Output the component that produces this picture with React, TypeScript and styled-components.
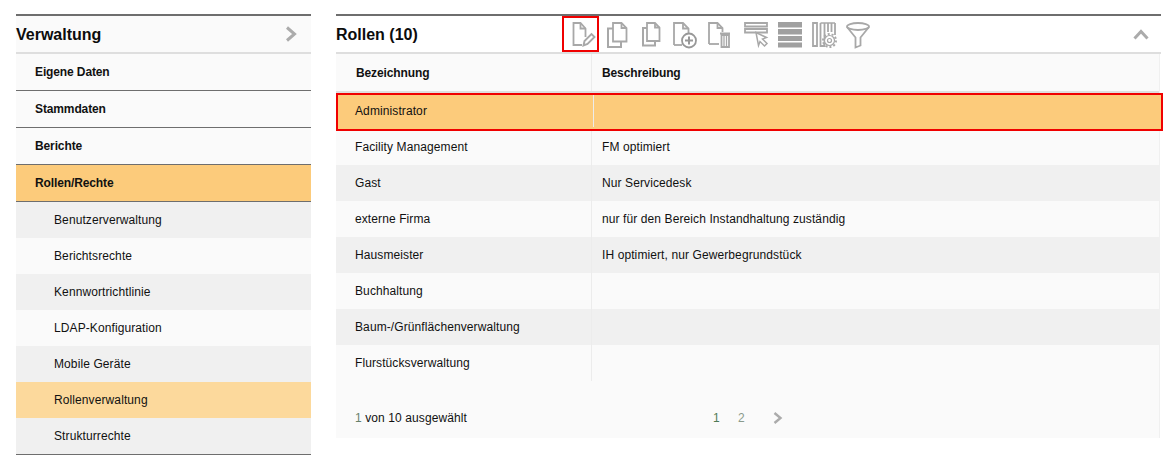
import React from "react";
import styled, { createGlobalStyle } from "styled-components";

const Global = createGlobalStyle`
  html, body { margin: 0; padding: 0; background: #fff; }
  body { font-family: "Liberation Sans", Arial, sans-serif; font-size: 12px; color: #111; letter-spacing: 0.1px; }
`;

const Page = styled.div`
  display: grid;
  grid-template-columns: 295px 825px;
  column-gap: 25px;
  align-items: start;
  padding: 14px 0 0 16px;
`;

const Sidebar = styled.aside`
  border-top: 2px solid #6e6e6e;
  background: #fafafa;
`;

const SideHeader = styled.header`
  height: 36px;
  border-bottom: 2px solid #dedede;
  display: flex;
  align-items: center;
  justify-content: space-between;
  padding-right: 14px;
`;

const Title = styled.h2<{ $width?: number }>`
  margin: 0;
  padding-top: 2px;
  font-size: 16px;
  font-weight: 700;
  letter-spacing: 0;
  color: #0c0c0c;
  flex: none;
  width: ${(p) => (p.$width ? `${p.$width}px` : "auto")};
`;

const MainItem = styled.div<{ $active?: boolean }>`
  height: 36px;
  border-bottom: 1px solid #6e6e6e;
  display: flex;
  align-items: center;
  padding-left: 19px;
  font-weight: 700;
  letter-spacing: -0.12px;
  background: ${(p) => (p.$active ? "#fccb7b" : "#fafafa")};
`;

const SubItem = styled.div<{ $bg: string }>`
  height: 36px;
  display: flex;
  align-items: center;
  padding-left: 38px;
  background: ${(p) => p.$bg};
`;

const SideEnd = styled.div`
  border-top: 1px solid #6e6e6e;
  height: 0;
  background: #fff;
`;

const Panel = styled.section`
  border-top: 2px solid #6e6e6e;
`;

const PanelHeader = styled.header`
  height: 36px;
  border-bottom: 2px solid #dedede;
  display: flex;
  align-items: stretch;
  background: #fff;
  & > h2 { align-self: center; }
`;

const Toolbar = styled.div`
  display: flex;
  align-items: center;
  flex: 1;
`;

const ToolButton = styled.div<{ $selected?: boolean; $gap?: number }>`
  box-sizing: border-box;
  width: ${(p) => (p.$selected ? 37 : 34)}px;
  height: 36px;
  margin-left: ${(p) => p.$gap ?? 0}px;
  padding-top: 2px;
  display: flex;
  align-items: center;
  justify-content: center;
  border: ${(p) => (p.$selected ? "2px solid #f00000" : "none")};
`;

const Collapse = styled.div`
  display: flex;
  align-items: center;
  padding-right: 12px;
`;

const Table = styled.div`
  background: #fafafa;
  border-right: 1px solid #f0f0f0;
  margin-right: 1px;
`;

const HeadRow = styled.div`
  display: grid;
  grid-template-columns: 256px 1fr;
  height: 37px;
  border-bottom: 2px solid #dedede;
  font-weight: 700;
  letter-spacing: -0.12px;
`;

const Row = styled.div<{ $bg: string; $selected?: boolean }>`
  box-sizing: border-box;
  display: grid;
  grid-template-columns: 256px 1fr;
  height: ${(p) => (p.$selected ? 38 : 36)}px;
  background: ${(p) => p.$bg};
  border: ${(p) => (p.$selected ? "2px solid #f00000" : "none")};
  margin: ${(p) => (p.$selected ? "0 -4px -2px 0" : "0")};
  padding-bottom: ${(p) => (p.$selected ? 2 : 0)}px;
  position: relative;
  z-index: ${(p) => (p.$selected ? 1 : 0)};
`;

const Cell = styled.div<{ $first?: boolean; $inset: number }>`
  box-sizing: border-box;
  display: flex;
  align-items: center;
  padding-left: ${(p) => p.$inset}px;
  border-right: ${(p) => (p.$first ? "1px solid #ececec" : "none")};
`;

const Footer = styled.footer`
  height: 57px;
  display: grid;
  grid-template-columns: 358px 1fr;
  padding: 22px 0 0 19px;
  box-sizing: border-box;
  line-height: 30px;
`;

const Count = styled.div`
  & > span { color: #66806a; }
`;

const Pager = styled.div`
  display: flex;
  align-items: center;
  height: 30px;
`;

const PageNum = styled.span<{ $current?: boolean }>`
  width: 25px;
  color: ${(p) => (p.$current ? "#4f7a55" : "#8a9a8c")};
`;

const PagerNext = styled.svg`
  margin-left: 10px;
`;

const Icon: React.FC<{ children: React.ReactNode }> = ({ children }) => (
  <svg
    width={24}
    height={26}
    viewBox="0 0 24 26"
    fill="none"
    stroke="#a8a8a8"
    strokeWidth={1.8}
    style={{ overflow: "visible" }}
  >
    {children}
  </svg>
);

const tools: { key: string; gap?: number; selected?: boolean; icon: React.ReactNode }[] = [
  {
    key: "edit",
    selected: true,
    icon: (
      <Icon>
        <path d="M16.5 15V6.500L11.500 1H4.500V23H13" />
        <path d="M11.500 1V6.500H16.500" />
        <path d="M14.500 23.500l1-4.500 7-7 3 3-7 7z" strokeWidth={1.9} />
      </Icon>
    ),
  },
  {
    key: "copy",
    icon: (
      <Icon>
        <path d="M9 1h8.500l5 5v13.500H9z" />
        <path d="M17.500 1v5h5" />
        <path d="M9 6.500H4V25h13v-5.500" strokeWidth={2} />
      </Icon>
    ),
  },
  {
    key: "copy-alt",
    icon: (
      <Icon>
        <path d="M9 1h8l4.500 4.500V19H9z" />
        <path d="M17 1v4.500h4.500" />
        <path d="M9 6H5v17.500h12V19" strokeWidth={2} />
      </Icon>
    ),
  },
  {
    key: "add",
    icon: (
      <Icon>
        <path d="M2 23V1h9l5.500 5.500V12" />
        <path d="M11 1v5.500h5.500" />
        <path d="M2 23h8" />
        <circle cx="17" cy="18.500" r="7" stroke="#989898" />
        <path d="M17 14.500v8M13 18.500h8" stroke="#989898" strokeWidth={2} />
      </Icon>
    ),
  },
  {
    key: "delete",
    icon: (
      <Icon>
        <path d="M3 22V1h8.500l5 5v4" />
        <path d="M11.500 1v5h5" />
        <path d="M3 22h10" />
        <path d="M14 11.500h10" strokeWidth={2} />
        <path d="M15.500 13h7.500v12h-7.500z" />
        <path d="M18 14v10M20.500 14v10" strokeWidth={1.300} />
      </Icon>
    ),
  },
  {
    key: "select-row",
    gap: 4,
    icon: (
      <Icon>
        <path d="M1 1h22v3.500H1z" strokeWidth={1.800} />
        <path d="M1 7h22v3.500H1z" strokeWidth={1.800} />
        <path d="M12 10.500l10.500 5-4 1.500 4.500 4.500-2.500 2.500-4.500-4.500-1.500 4z" fill="#fff" strokeWidth={1.500} />
      </Icon>
    ),
  },
  {
    key: "rows",
    icon: (
      <svg width={24} height={26} viewBox="0 0 24 26" fill="#a0a0a0">
        <rect x="0" y="0" width="24" height="5.500" />
        <rect x="0" y="7" width="24" height="5.500" />
        <rect x="0" y="14" width="24" height="5" />
        <rect x="0" y="20.500" width="24" height="5" />
      </svg>
    ),
  },
  {
    key: "columns",
    icon: (
      <Icon>
        <path d="M1 1h4v23H1z" />
        <path d="M8.500 1h14.500" strokeWidth={1.500} />
        <path d="M8.500 1v23h4V1" />
        <path d="M16 1v9M19.500 1v9M23 1v12" />
        <circle cx="17.500" cy="18.500" r="5" fill="#fff" strokeWidth={1.200} />
        <circle cx="17.500" cy="18.500" r="6.500" strokeWidth={2} strokeDasharray="2 2" />
        <circle cx="17.500" cy="18.500" r="2" strokeWidth={1.200} />
      </Icon>
    ),
  },
  {
    key: "filter",
    icon: (
      <Icon>
        <ellipse cx="12" cy="4.500" rx="11" ry="3.500" />
        <path d="M1 5l8.500 10.500V25.500l5-2v-8L23 5" />
      </Icon>
    ),
  },
];

const mainItems = ["Eigene Daten", "Stammdaten", "Berichte"];
const subItems = [
  "Benutzerverwaltung",
  "Berichtsrechte",
  "Kennwortrichtlinie",
  "LDAP-Konfiguration",
  "Mobile Geräte",
  "Rollenverwaltung",
  "Strukturrechte",
];
const rows: [string, string][] = [
  ["Facility Management", "FM optimiert"],
  ["Gast", "Nur Servicedesk"],
  ["externe Firma", "nur für den Bereich Instandhaltung zuständig"],
  ["Hausmeister", "IH optimiert, nur Gewerbegrundstück"],
  ["Buchhaltung", ""],
  ["Baum-/Grünflächenverwaltung", ""],
  ["Flurstücksverwaltung", ""],
];

export default function App() {
  return (
    <>
      <Global />
      <Page>
        <Sidebar>
          <SideHeader>
            <Title>Verwaltung</Title>
            <svg width="12" height="16" viewBox="0 0 12 16" fill="none" stroke="#ababab" strokeWidth={3}>
              <path d="M2 1.500L9.500 8 2 14.500" />
            </svg>
          </SideHeader>
          {mainItems.map((m) => (
            <MainItem key={m}>{m}</MainItem>
          ))}
          <MainItem $active>Rollen/Rechte</MainItem>
          {subItems.map((s, i) => (
            <SubItem key={s} $bg={s === "Rollenverwaltung" ? "#fcd99c" : i % 2 === 0 ? "#f0f0f0" : "#fafafa"}>
              {s}
            </SubItem>
          ))}
          <SideEnd />
        </Sidebar>
        <Panel>
          <PanelHeader>
            <Title $width={226}>Rollen (10)</Title>
            <Toolbar>
              {tools.map((t) => (
                <ToolButton key={t.key} $selected={t.selected} $gap={t.gap}>
                  {t.icon}
                </ToolButton>
              ))}
            </Toolbar>
            <Collapse>
              <svg width="16" height="11" viewBox="0 0 16 11" fill="none" stroke="#ababab" strokeWidth={3}>
                <path d="M1.500 9.500L8 2.500l6.500 7" />
              </svg>
            </Collapse>
          </PanelHeader>
          <Table>
            <HeadRow>
              <Cell $first $inset={20}>Bezeichnung</Cell>
              <Cell $inset={10}>Beschreibung</Cell>
            </HeadRow>
            <Row $bg="#fccb7b" $selected>
              <Cell $first $inset={17}>Administrator</Cell>
              <Cell $inset={10} />
            </Row>
            {rows.map(([a, b], i) => (
              <Row key={a} $bg={i % 2 === 1 ? "#f0f0f0" : "#fafafa"}>
                <Cell $first $inset={19}>{a}</Cell>
                <Cell $inset={10}>{b}</Cell>
              </Row>
            ))}
            <Footer>
              <Count>
                <span>1</span> von 10 ausgewählt
              </Count>
              <Pager>
                <PageNum $current>1</PageNum>
                <PageNum>2</PageNum>
                <PagerNext width="10" height="12" viewBox="0 0 10 12" fill="none" stroke="#ababab" strokeWidth={2.400}>
                  <path d="M1.500 1L7.500 6 1.500 11" />
                </PagerNext>
              </Pager>
            </Footer>
          </Table>
        </Panel>
      </Page>
    </>
  );
}
